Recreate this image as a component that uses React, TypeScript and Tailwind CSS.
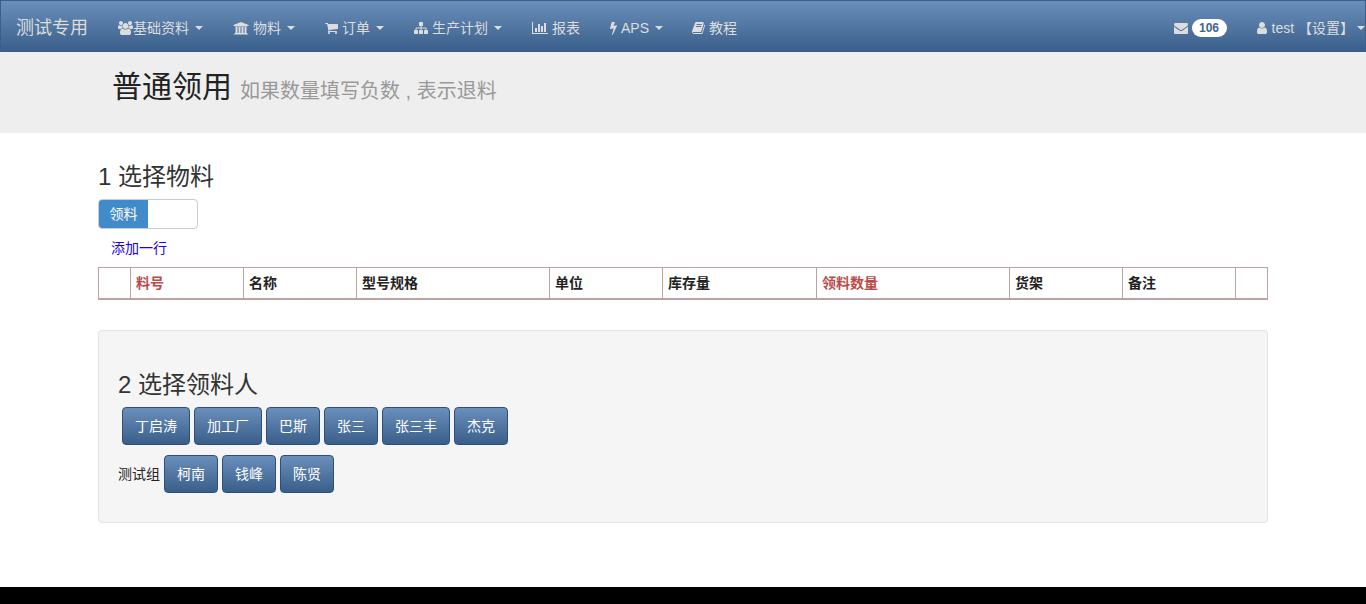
import React from "react";

const fontStack = "font-['Liberation_Sans','Noto_Sans_CJK_SC',sans-serif]";

// font awesome 4 glyphs, drawn at 14px tall like the original icon font
const Icon = ({ box, w, d }: { box: string; w: string; d: string }) => (
  <svg viewBox={box} className={`h-[14px] shrink-0 fill-current ${w}`}>
    <path d={d} />
  </svg>
);

const icons = {
  users: (
    <Icon
      box="0 0 1920 1792"
      w="w-[15px]"
      d="M593 896q-162 5-265 128h-134q-82 0-138-40.500t-56-118.500q0-353 124-353 6 0 43.500 21t97.500 42.500 119 21.500q67 0 133-23-5 37-5 66 0 139 81 256zm1071 637q0 120-73 189.500t-194 69.500h-874q-121 0-194-69.500t-73-189.500q0-53 3.500-103.500t14-109 26.500-108.500 43-97.500 62-81 85.500-53.500 111.500-20q10 0 43 21.500t73 48 107 48 135 21.500 135-21.500 107-48 73-48 43-21.500q61 0 111.500 20t85.500 53.500 62 81 43 97.500 26.500 108.500 14 109 3.500 103.500zm-1024-1277q0 106-75 181t-181 75-181-75-75-181 75-181 181-75 181 75 75 181zm704 384q0 159-112.500 271.500t-271.500 112.500-271.500-112.500-112.500-271.500 112.500-271.500 271.500-112.500 271.500 112.500 112.500 271.500zm576 225q0 78-56 118.500t-138 40.500h-134q-103-123-265-128 81-117 81-256 0-29-5-66 66 23 133 23 59 0 119-21.500t97.500-42.500 43.500-21q124 0 124 353zm-128-609q0 106-75 181t-181 75-181-75-75-181 75-181 181-75 181 75 75 181z"
    />
  ),
  bank: (
    <Icon
      box="0 0 2048 1792"
      w="w-[16px]"
      d="M1024 128l960 384v128h-128q0 26-20.500 45t-48.500 19h-1526q-28 0-48.500-19t-20.500-45h-128v-128zm-704 640h256v768h128v-768h256v768h128v-768h256v768h128v-768h256v768h59q28 0 48.500 19t20.500 45v64h-1664v-64q0-26 20.500-45t48.500-19h59v-768zm1595 960q28 0 48.500 19t20.500 45v128h-1920v-128q0-26 20.500-45t48.500-19h1782z"
    />
  ),
  cart: (
    <Icon
      box="64 0 1664 1792"
      w="w-[13px]"
      d="M704 1536q0 52-38 90t-90 38-90-38-38-90 38-90 90-38 90 38 38 90zm896 0q0 52-38 90t-90 38-90-38-38-90 38-90 90-38 90 38 38 90zm128-1088v512q0 24-16.500 42.500t-40.500 21.500l-1044 122q13 60 13 70 0 16-24 64h920q26 0 45 19t19 45-19 45-45 19h-1024q-26 0-45-19t-19-45q0-11 8-31.500t16-36 21.500-40 15.500-29.500l-177-823h-204q-26 0-45-19t-19-45 19-45 45-19h256q16 0 28.500 6.500t19.500 15.500 13 24.500 8 26 5.500 29.500 4.500 26h1201q26 0 45 19t19 45z"
    />
  ),
  sitemap: (
    <Icon
      box="0 0 1792 1792"
      w="w-[14px]"
      d="M1792 1248v320q0 40-28 68t-68 28h-320q-40 0-68-28t-28-68v-320q0-40 28-68t68-28h96v-192h-512v192h96q40 0 68 28t28 68v320q0 40-28 68t-68 28h-320q-40 0-68-28t-28-68v-320q0-40 28-68t68-28h96v-192h-512v192h96q40 0 68 28t28 68v320q0 40-28 68t-68 28h-320q-40 0-68-28t-28-68v-320q0-40 28-68t68-28h96v-192q0-52 38-90t90-38h512v-192h-96q-40 0-68-28t-28-68v-320q0-40 28-68t68-28h320q40 0 68 28t28 68v320q0 40-28 68t-68 28h-96v192h512q52 0 90 38t38 90v192h96q40 0 68 28t28 68z"
    />
  ),
  chart: (
    <Icon
      box="0 0 2048 1792"
      w="w-[16px]"
      d="M640 896v512h-256v-512h256zm384-512v1024h-256v-1024h256zm1024 1152v128h-2048v-1536h128v1408h1920zm-640-896v768h-256v-768h256zm384-384v1152h-256v-1152h256z"
    />
  ),
  bolt: (
    <Icon
      box="448 0 896 1792"
      w="w-[7px]"
      d="M1333 566q18 20 7 44l-540 1157q-13 25-42 25-4 0-14-2-17-5-25.500-19t-4.500-30l197-808-406 101q-4 1-12 1-18 0-31-11-18-15-13-39l201-825q4-14 16-23t28-9h328q19 0 32 12.500t13 29.500q0 8-5 18l-171 463 396-98q8-2 12-2 19 0 34 15z"
    />
  ),
  book: (
    <Icon
      box="64 0 1664 1792"
      w="w-[13px]"
      d="M1703 478q40 57 18 129l-275 906q-19 64-76.500 107.500t-122.500 43.500h-923q-77 0-148.500-53.500t-99.500-131.500q-24-67-2-127 0-4 3-27t4-37q1-8-3-21.500t-3-19.500q2-11 8-21t16.500-23.500 16.500-23.500q23-38 45-91.500t30-91.500q3-10 .5-30t-.5-28q3-11 17-28t17-23q21-36 42-92t25-90q1-9-2.500-32t.5-28q4-13 22-30.500t22-22.500q19-26 42.500-84.500t27.500-96.500q1-8-3-25.500t-2-26.500q2-8 9-18t18-23 17-21q8-12 16.500-30.500t15-35 16-36 19.500-32 26.500-23.500 36-11.500 47.500 5.500l-1 3q38-9 51-9h761q74 0 114 56t18 130l-274 906q-36 119-71.500 153.500t-128.500 34.500h-869q-27 0-38 15-11 16-1 43 24 70 144 70h923q29 0 56-15.500t35-41.500l300-987q7-22 5-57 38 15 59 43zm-1064 2q-4 13 2 22.500t20 9.500h608q13 0 25.500-9.500t16.500-22.500l21-64q4-13-2-22.500t-20-9.500h-608q-13 0-25.500 9.500t-16.500 22.500zm-83 256q-4 13 2 22.500t20 9.500h608q13 0 25.500-9.500t16.500-22.500l21-64q4-13-2-22.500t-20-9.500h-608q-13 0-25.500 9.500t-16.500 22.500z"
    />
  ),
  envelope: (
    <Icon
      box="0 0 1792 1792"
      w="w-[14px]"
      d="M1792 710v794q0 66-47 113t-113 47h-1472q-66 0-113-47t-47-113v-794q44 49 101 87 362 246 497 345 57 42 92.500 65.500t94.500 48 110 24.500h2q51 0 110-24.500t94.500-48 92.500-65.500q170-123 498-345 57-39 100-87zm0-294q0 79-49 151t-122 123q-376 261-468 325-10 7-42.500 30.500t-54 38-52 32.500-57.500 27-50 9h-2q-23 0-50-9t-57.500-27-52-32.500-54-38-42.500-30.500q-91-64-262-182.500t-205-142.500q-62-42-117-115.500t-55-136.500q0-78 41.500-130t118.500-52h1472q65 0 112.500 47t47.500 113z"
    />
  ),
  user: (
    <Icon
      box="256 0 1280 1792"
      w="w-[10px]"
      d="M1536 1399q0 109-62.500 187t-150.500 78h-854q-88 0-150.500-78t-62.500-187q0-85 8.500-160.500t31.500-152 58.500-131 94-89 134.500-34.500q131 128 313 128t313-128q76 0 134.500 34.500t94 89 58.500 131 31.500 152 8.500 160.500zm-256-887q0 159-112.500 271.500t-271.500 112.500-271.500-112.500-112.500-271.500 112.500-271.500 271.500-112.500 271.500 112.500 112.500 271.500z"
    />
  ),
};

const Caret = ({ gap = "ml-[6px]" }: { gap?: string }) => (
  <span className={`inline-block h-0 w-0 border-x-4 border-t-4 border-x-transparent border-t-[#dddddd] align-middle ${gap}`} />
);

const NavItem = ({
  icon,
  label,
  caret = true,
  gap = "ml-1",
  width,
}: {
  icon: React.ReactNode;
  label: string;
  caret?: boolean;
  gap?: string;
  width: string;
}) => (
  <div className={`flex items-center text-sm text-[#dddddd] ${width}`}>
    {icon}
    <span className={gap}>{label}</span>
    {caret && <Caret />}
  </div>
);

const PersonButton = ({ name }: { name: string }) => (
  <button className="h-[38px] rounded border border-[#2f4f78] bg-gradient-to-b from-[#6a8fbb] to-[#3a5f8b] px-3 text-sm text-white">
    {name}
  </button>
);

const columns = [
  { w: "w-[32px]", label: "" },
  { w: "w-[113px]", label: "料号", red: true },
  { w: "w-[113px]", label: "名称" },
  { w: "w-[193px]", label: "型号规格" },
  { w: "w-[113px]", label: "单位" },
  { w: "w-[154px]", label: "库存量" },
  { w: "w-[193px]", label: "领料数量", red: true },
  { w: "w-[113px]", label: "货架" },
  { w: "w-[113px]", label: "备注" },
  { w: "w-[32px]", label: "" },
];

export default function App() {
  return (
    <div className={`flex h-[604px] flex-col overflow-hidden bg-white text-[#333333] ${fontStack}`}>
      <nav className="flex h-[52px] shrink-0 items-center border border-[#3b5f8a] bg-gradient-to-b from-[#6a8fbb] to-[#3a5f8b] pt-[3px]">
        <span className="ml-[15px] w-[102px] text-lg text-[#dddddd]">测试专用</span>
        <NavItem width="w-[115px]" gap="" icon={icons.users} label="基础资料" />
        <NavItem width="w-[92px]" icon={icons.bank} label="物料" />
        <NavItem width="w-[89px]" icon={icons.cart} label="订单" />
        <NavItem width="w-[118px]" icon={icons.sitemap} label="生产计划" />
        <NavItem width="w-[78px]" caret={false} icon={icons.chart} label="报表" />
        <NavItem width="w-[82px]" gap="ml-[4px]" icon={icons.bolt} label="APS" />
        <NavItem width="w-[60px]" caret={false} icon={icons.book} label="教程" />
        <div className="ml-auto flex items-center text-sm text-[#dddddd]">
          {icons.envelope}
          <span className="ml-[4px] w-[35px] rounded-[10px] bg-white py-[3px] text-center text-xs leading-3 font-bold text-[#3f6592]">
            106
          </span>
          <span className="ml-[30px]">{icons.user}</span>
          <span className="ml-[5px]">test 【设置】</span>
          <Caret gap="ml-[3px]" />
        </div>
      </nav>

      <header className="h-[81px] shrink-0 bg-[#eeeeee] pt-[15px] pl-[112px]">
        <h1 className="text-[30px] leading-[40px] text-[#222222]">
          普通领用
          <small className="relative top-px ml-2 text-xl text-[#999999]">如果数量填写负数 , 表示退料</small>
        </h1>
      </header>

      <main className="mx-[98px] flex-1">
        <h3 className="mt-[29px] text-2xl leading-[30px]">1 选择物料</h3>
        <div className="mt-[7px] flex h-[30px] w-[100px] overflow-hidden rounded border border-[#cccccc]">
          <span className="flex w-[49px] items-center justify-center bg-[#428bca] text-sm text-white">领料</span>
        </div>
        <a className="mt-[9px] ml-[13px] block text-sm leading-[20px] text-[#2200dd]">添加一行</a>
        <table className="mt-[9px] w-[1169px] table-fixed border-collapse border-b-2 border-b-[#b9a3a3]">
          <thead>
            <tr className="h-[31px]">
              {columns.map((c, i) => (
                <th
                  key={i}
                  className={`border border-[#b9a3a3] px-[5px] text-left text-sm font-bold ${c.w} ${c.red ? "text-[#b94a48]" : "text-[#222222]"}`}
                >
                  {c.label}
                </th>
              ))}
            </tr>
          </thead>
        </table>

        <section className="mt-[30px] h-[193px] rounded border border-[#e3e3e3] bg-[#f5f5f5] px-[19px] pt-[39px]">
          <h3 className="text-2xl leading-[30px]">2 选择领料人</h3>
          <div className="mt-[7px] flex gap-1 pl-[4px]">
            {["丁启涛", "加工厂", "巴斯", "张三", "张三丰", "杰克"].map((n) => (
              <PersonButton key={n} name={n} />
            ))}
          </div>
          <div className="mt-[10px] flex items-center gap-1">
            <span className="text-sm text-[#222222]">测试组</span>
            {["柯南", "钱峰", "陈贤"].map((n) => (
              <PersonButton key={n} name={n} />
            ))}
          </div>
        </section>
      </main>

      <footer className="h-[17px] shrink-0 bg-black" />
    </div>
  );
}
